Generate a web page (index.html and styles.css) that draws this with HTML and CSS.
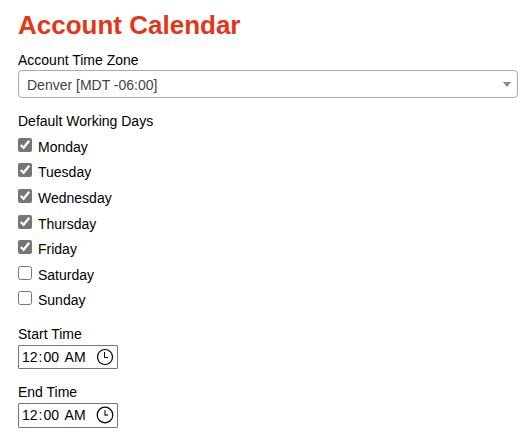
FILE: index.html
```html
<!DOCTYPE html>
<html lang="en">
    <head>
        <title>Account Calendar</title>
        <meta charset="utf-8">
        <meta name="viewport" content="width=device-width, initial-scale=1">
        <link rel="stylesheet" href="styles.css">
    </head>
    <body>
        <h1>Account Calendar</h1>
        <form>
            <div class="field">
                <div class="title">Account Time Zone</div>
                <div class="select" tabindex="0">
                    <span>Denver [MDT -06:00]</span>
                    <span class="arrow"></span>
                </div>
            </div>
            <div class="field days">
                <div class="title">Default Working Days</div>
                <label><input type="checkbox" checked><span>Monday</span></label>
                <label><input type="checkbox" checked><span>Tuesday</span></label>
                <label><input type="checkbox" checked><span>Wednesday</span></label>
                <label><input type="checkbox" checked><span>Thursday</span></label>
                <label><input type="checkbox" checked><span>Friday</span></label>
                <label><input type="checkbox"><span>Saturday</span></label>
                <label><input type="checkbox"><span>Sunday</span></label>
            </div>
            <div class="field start">
                <div class="title">Start Time</div>
                <div class="time">
                    <span class="hour">12<span class="colon">:</span>00</span>
                    <span>AM</span>
                    <svg class="clock" viewBox="0 0 18 18"><circle cx="9" cy="9" r="7.5"/><path d="M8.5 4V9.5H12"/></svg>
                </div>
            </div>
            <div class="field end">
                <div class="title">End Time</div>
                <div class="time">
                    <span class="hour">12<span class="colon">:</span>00</span>
                    <span>AM</span>
                    <svg class="clock" viewBox="0 0 18 18"><circle cx="9" cy="9" r="7.8"/><path d="M9 4V9H12"/></svg>
                </div>
            </div>
        </form>
    </body>
</html>
```

FILE: styles.css
```css
html, body {
    margin: 0;
    padding: 0;
    background-color: #fff;
}

body {
    padding: 9px 6px 0 18px;
    color: #000;
    font-family: "Liberation Sans", Arial, sans-serif;
    font-size: 14px;
}

h1 {
    margin: 0 0 11px;
    color: #e23617;
    font-size: 26px;
    line-height: 32px;
}

.title {
    height: 18px;
    line-height: 17px;
}

.select {
    box-sizing: border-box;
    display: flex;
    align-items: center;
    justify-content: space-between;
    height: 28px;
    padding: 2px 6px 0 8px;
    border: 1px solid #aaa;
    border-radius: 4px;
    color: #444;
}

.arrow {
    margin-bottom: 2px;
    border: 4px solid transparent;
    border-top: 5px solid #888;
    border-bottom: 0;
}

.days {
    margin-top: 15px;
}

.days .title {
    height: 20.8px;
}

.days label {
    display: flex;
    height: 25.6px;
    line-height: 26px;
}

.days input {
    width: 14px;
    height: 14px;
    margin: 4px 6px 0 0;
    accent-color: #767676;
}

.start {
    margin-top: 13px;
}

.start .title {
    height: 19px;
}

.end {
    margin-top: 15px;
}

.end .title {
    height: 19px;
}

.time {
    box-sizing: border-box;
    display: flex;
    align-items: center;
    width: 100px;
    height: 24px;
    padding: 0 3px;
    border: 1px solid #767676;
    border-radius: 1px;
}

.end .time {
    height: 25px;
}

.hour {
    margin-right: 5.5px;
}

.colon {
    padding: 0 1px;
}

.clock {
    width: 18px;
    height: 18px;
    margin-left: auto;
    fill: none;
    stroke: #000;
    stroke-width: 1.2;
}

.clock path {
    stroke-width: 1;
}

.end .clock path {
    stroke: #333;
    stroke-width: 1.3;
}
```
